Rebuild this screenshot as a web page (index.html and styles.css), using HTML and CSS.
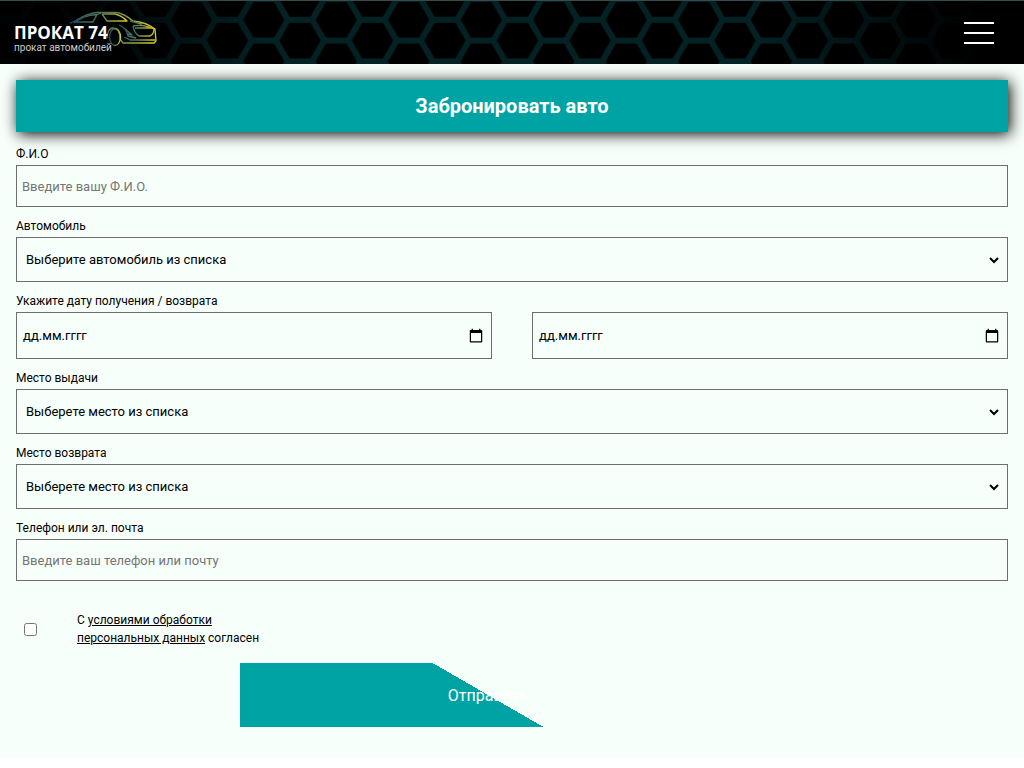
FILE: index.html
```html
<!DOCTYPE html>
<html lang="ru">
<head>
<meta charset="utf-8">
<meta name="viewport" content="width=device-width, initial-scale=1">
<title>Прокат 74 — Забронировать авто</title>
<link rel="stylesheet" href="styles.css">
</head>
<body>
<header class="header">
  <svg class="header-pattern" width="100%" height="100%" aria-hidden="true">
    <defs>
      <pattern id="hex" x="10" y="-2" width="72.5" height="41.6" patternUnits="userSpaceOnUse">
        <path d="M-12.1 20.8H12.1L24.2 41.6H48.3L60.4 20.8H84.6M12.1 20.8L24.2 0H48.3L60.4 20.8" fill="none" stroke="#042124" stroke-width="6"/>
      </pattern>
      <linearGradient id="fade">
        <stop offset="0.09" stop-color="#000" stop-opacity="0.9"/>
        <stop offset="0.26" stop-color="#000" stop-opacity="0"/>
        <stop offset="0.74" stop-color="#000" stop-opacity="0"/>
        <stop offset="0.96" stop-color="#000"/>
      </linearGradient>
    </defs>
    <rect width="100%" height="100%" fill="url(#hex)"/>
    <rect width="100%" height="100%" fill="url(#fade)"/>
  </svg>
  <a class="logo" href="#">
    <svg class="logo-car" viewBox="0 0 96 50" aria-hidden="true">
      <defs>
        <linearGradient id="car">
          <stop offset="0" stop-color="#1f5468"/>
          <stop offset="0.5" stop-color="#5c7d55"/>
          <stop offset="1" stop-color="#d8d01c"/>
        </linearGradient>
      </defs>
      <g fill="none" stroke="url(#car)" stroke-width="1.3" stroke-linejoin="round">
        <path d="M4 17C10 16 16 8 31 6.500H50C56 7 61 10 67 15C76 16 84 19 89 23L90 35L88 37H57L54 33C54 27 52 22 47 22C43 22 41 27 41 32"/>
        <path d="M8 17C16 12 20 9 31 8.500L35 7M31 8.500L27 16H8M36 8H49C54 9 58 12 61 15H41L36 8"/>
        <ellipse cx="49" cy="31" rx="5.500" ry="8.500"/>
        <path d="M53 19C58 21 61 25 62 30L70 32M58 22L66 29L62 28M67 20Q78 18 88 23Q88 28 84 30H73Q68 27 67 20M69 22H87M58 31L64 34H89M64 15L76 18"/>
      </g>
    </svg>
    <span class="logo-name">ПРОКАТ 74</span>
    <span class="logo-tagline">прокат автомобилей</span>
  </a>
  <button class="menu" type="button" aria-label="Меню"><span class="menu-line"></span><span class="menu-line"></span><span class="menu-line"></span></button>
</header>
<main class="booking">
  <h1 class="title">Забронировать авто</h1>
  <form class="form">
    <div class="field">
      <label class="label" for="name">Ф.И.О</label>
      <input class="control" id="name" type="text" placeholder="Введите вашу Ф.И.О.">
    </div>
    <div class="field">
      <label class="label" for="car-select">Автомобиль</label>
      <select class="control control-select" id="car-select"><option>Выберите автомобиль из списка</option></select>
    </div>
    <div class="field">
      <label class="label" for="date-from">Укажите дату получения / возврата</label>
      <div class="dates">
        <div class="date">
          <input class="control control-date" id="date-from" type="date">
          <span class="date-hint">дд.мм.гггг</span>
        </div>
        <div class="date">
          <input class="control control-date" type="date" aria-label="Дата возврата">
          <span class="date-hint">дд.мм.гггг</span>
        </div>
      </div>
    </div>
    <div class="field">
      <label class="label" for="place-from">Место выдачи</label>
      <select class="control control-select" id="place-from"><option>Выберете место из списка</option></select>
    </div>
    <div class="field">
      <label class="label" for="place-to">Место возврата</label>
      <select class="control control-select" id="place-to"><option>Выберете место из списка</option></select>
    </div>
    <div class="field">
      <label class="label" for="contact">Телефон или эл. почта</label>
      <input class="control" id="contact" type="text" placeholder="Введите ваш телефон или почту">
    </div>
    <div class="consent">
      <input class="consent-box" id="consent" type="checkbox">
      <label class="consent-text" for="consent">С <a class="consent-link" href="#">условиями обработки персональных данных</a> согласен</label>
    </div>
    <button class="submit" type="submit">Отправить</button>
  </form>
</main>
</body>
</html>
```
FILE: styles.css
```css
* {
  box-sizing: border-box;
}

body {
  margin: 0;
  background: #fff;
  color: #000;
  font-family: Roboto, sans-serif;
}

.header {
  position: relative;
  display: flex;
  justify-content: space-between;
  height: 64px;
  padding: 0 30px 0 14px;
  border-top: 1px solid #354c4c;
  background: #000;
}

.header-pattern {
  position: absolute;
  inset: 0;
}

.logo {
  position: relative;
  display: flex;
  flex-direction: column;
  width: 144px;
  padding-top: 23px;
  color: #fff;
  text-decoration: none;
  white-space: nowrap;
}

.logo-car {
  position: absolute;
  left: 52px;
  top: 5px;
  width: 96px;
  height: 50px;
}

.logo-name {
  position: relative;
  font: bold 17px/18px "Open Sans", sans-serif;
}

.logo-tagline {
  position: relative;
  color: #ccc;
  font: 10px/12px Roboto, sans-serif;
}

.menu {
  position: relative;
  display: flex;
  flex-direction: column;
  align-self: center;
  gap: 8px;
  width: 30px;
  padding: 0;
  border: 0;
  background: none;
}

.menu-line {
  height: 2px;
  background: #fff;
}

.booking {
  padding: 16px 16px 31px;
  background: #f7fffb;
}

.title {
  margin: 0 0 13px;
  padding: 14px;
  background: #00a3a3;
  box-shadow: 2px 2px 14px #000;
  color: #fff;
  font-size: 20px;
  line-height: 24px;
  text-align: center;
}

.form {
  display: flex;
  flex-direction: column;
  gap: 10px;
}

.field {
  display: flex;
  flex-direction: column;
}

.label {
  padding-bottom: 2px;
  font-size: 12px;
  line-height: 18px;
}

.control {
  width: 100%;
  height: 42px;
  padding: 0 5px;
  border: 1px solid #6b706e;
  border-radius: 0;
  background: transparent;
  color: #000;
  font: 13px Roboto, sans-serif;
}

.control::placeholder {
  color: #757575;
}

.control-select {
  height: 45px;
  padding: 0 24px 0 9px;
  appearance: none;
  background: url("data:image/svg+xml,%3Csvg xmlns='http://www.w3.org/2000/svg' width='10' height='8' viewBox='0 0 10 8'%3E%3Cpath d='M1 2L5 6L9 2' fill='none' stroke='%23000' stroke-width='2'/%3E%3C/svg%3E") no-repeat right 8px center;
}

.dates {
  display: grid;
  grid-template-columns: 1fr 1fr;
  gap: 40px;
}

.date {
  position: relative;
}

.control-date {
  display: block;
  height: 47px;
  padding-right: 5px;
}

.control-date::-webkit-datetime-edit {
  opacity: 0;
}

.control-date::-webkit-calendar-picker-indicator {
  width: 16px;
  height: 16px;
}

.date-hint {
  position: absolute;
  top: 0;
  bottom: 0;
  left: 7px;
  display: flex;
  align-items: center;
  font-size: 13px;
  pointer-events: none;
}

.consent {
  display: flex;
  align-items: center;
  gap: 40px;
  padding: 20px 0 6px 8px;
}

.consent-box {
  width: 13px;
  height: 13px;
  margin: 0;
}

.consent-text {
  width: 200px;
  font-size: 12px;
  line-height: 18px;
}

.consent-link {
  color: inherit;
}

.submit {
  width: 50%;
  height: 64px;
  margin-left: 224px;
  border: 0;
  background: linear-gradient(30deg, #00a3a3 50%, transparent 50%);
  color: #fff;
  font: 16px Roboto, sans-serif;
}
```
